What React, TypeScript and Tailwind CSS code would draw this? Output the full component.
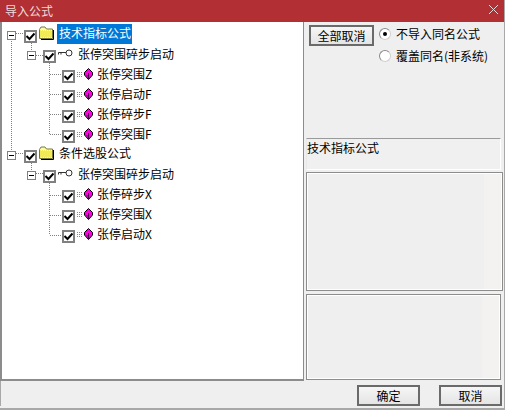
const font = "font-['Noto_Sans_CJK_SC','Liberation_Sans',sans-serif]";

function Check() {
  return (
    <span className="w-[13px] h-[13px] border-2 border-[#808080] bg-white flex items-center justify-center shrink-0">
      <svg width="9" height="9" viewBox="0 0 9 9">
        <path d="M0.5 4 L3.5 7 L8.5 1.5" fill="none" stroke="#000" strokeWidth="2" />
      </svg>
    </span>
  );
}

function Expander() {
  return (
    <span className="w-[9px] h-[9px] border border-[#808080] bg-white flex items-center justify-center shrink-0">
      <span className="w-[5px] h-px bg-black" />
    </span>
  );
}

function Folder() {
  return (
    <svg width="15" height="14" viewBox="0 0 15 14" className="shrink-0">
      <path d="M0.5 3.5 L2 1 H6 L7.5 3 H13.5 V12.5 H0.5 Z" fill="#fffbb0" stroke="#77773a" />
      <path d="M1 5 H13 M2 6 H13 M1 7 H13 M2 8 H13 M1 9 H13 M2 10 H13 M1 11 H13" stroke="#e6d800" strokeDasharray="1 1" />
      <path d="M14.5 4 V13.5 H2" fill="none" stroke="#000" />
    </svg>
  );
}

function Key() {
  return (
    <svg width="15" height="8" viewBox="0 0 15 8" className="shrink-0">
      <circle cx="11" cy="4" r="3" fill="#fff" stroke="#333" />
      <path d="M8 3.5 H0.5 V5.5 M3 3.5 V5.5" fill="none" stroke="#333" />
    </svg>
  );
}

function Gem() {
  return (
    <span className="flex items-center shrink-0">
      <svg width="7" height="7" viewBox="0 0 7 7">
        <path d="M0 1.5 H5 M0 3.5 H6 M0 5.5 H5" stroke="#8a8a8a" strokeDasharray="1 1" />
      </svg>
      <svg width="9" height="12" viewBox="0 0 9 12">
        <path d="M4.5 0.5 L8.5 4.5 V7 L4.5 11.5 L0.5 7 V4.5 Z" fill="#ff00e6" stroke="#000" />
        <path d="M1 7 L4.5 11 V7 Z" fill="#a0109a" />
        <path d="M4.5 5 V11" stroke="#50004a" />
      </svg>
    </span>
  );
}

const rows = [
  { level: 0, text: "技术指标公式", selected: true },
  { level: 1, text: "张停突围碎步启动" },
  { level: 2, text: "张停突围Z" },
  { level: 2, text: "张停启动F" },
  { level: 2, text: "张停碎步F" },
  { level: 2, text: "张停突围F" },
  { level: 0, text: "条件选股公式" },
  { level: 1, text: "张停突围碎步启动" },
  { level: 2, text: "张停碎步X" },
  { level: 2, text: "张停突围X" },
  { level: 2, text: "张停启动X" },
];

function Row({ level, text, selected }: { level: number; text: string; selected?: boolean }) {
  if (level === 0) {
    return (
      <div className="h-[20px] flex items-center pl-[7px]">
        <span className="mt-[2px]"><Expander /></span>
        <span className="w-[8px]" />
        <span className="mt-[4px]"><Check /></span>
        <span className="ml-[2px] -mt-[3px]"><Folder /></span>
        <span className={"ml-[3px] h-[20px] pl-[2px] pr-[1px] leading-[18px] " + (selected ? "bg-[#0078d7] text-white" : "text-black")}>{text}</span>
      </div>
    );
  }
  if (level === 1) {
    return (
      <div className="h-[20px] flex items-center pl-[27px]">
        <span className="mt-[2px]"><Expander /></span>
        <span className="w-[7px]" />
        <span className="mt-[5px]"><Check /></span>
        <span className="ml-[2px] -mt-[2px]"><Key /></span>
        <span className="ml-[5px] text-black">{text}</span>
      </div>
    );
  }
  return (
    <div className="h-[20px] flex items-center pl-[62px]">
      <span className="mt-[5px]"><Check /></span>
      <span className="ml-[2px]"><Gem /></span>
      <span className="ml-[4px] text-black">{text}</span>
    </div>
  );
}

function Connectors() {
  return (
    <svg className="absolute -left-[2px] top-0" width="100" height="240" stroke="#808080" strokeDasharray="1 1" fill="none">
      <path d="M11.5 17 V129 M16 11.5 H24 M31.5 21 V29 M36 33.5 H43 M49.5 41 V113 M50 52.5 H62 M50 72.5 H62 M50 92.5 H62 M50 112.5 H62" />
      <path d="M16 131.5 H24 M31.5 141 V149 M36 151.5 H43 M49.5 161 V213 M50 173.5 H62 M50 193.5 H62 M50 213.5 H62" />
    </svg>
  );
}

function Btn({ children, className }: { children: string; className: string }) {
  return (
    <button className={"border-2 border-[#6a6a6a] bg-gradient-to-b from-[#f6f6f6] to-[#e4e4e4] text-[12px] leading-[16px] text-black " + className}>
      {children}
    </button>
  );
}

function Radio({ on, label }: { on?: boolean; label: string }) {
  return (
    <div className="flex items-center h-[22px]">
      <span className="w-[12px] h-[12px] rounded-full border border-[#8a8a8a] border-r-[#d0d0d0] border-b-[#d0d0d0] bg-white flex items-center justify-center">
        {on && <span className="w-[4px] h-[4px] rounded-full bg-black" />}
      </span>
      <span className="ml-[5px] text-black">{label}</span>
    </div>
  );
}

function Panel({ className }: { className: string }) {
  return (
    <div className={"border border-[#8c8c8c] flex justify-end shrink-0 shadow-[inset_1px_1px_0_#fff,inset_-1px_-1px_0_#fff] " + className}>
      <div className="w-[17px] my-[1px] mr-[1px] bg-[#f3f2f0]" />
    </div>
  );
}

export default function App() {
  return (
    <div className={"w-[505px] h-[410px] bg-[#efefef] flex flex-col text-[12px] overflow-hidden border-b-2 border-r border-[#a8a8a8] " + font}>
      <div className="h-[22px] bg-[#b22f33] flex items-center justify-between pl-[5px] shrink-0">
        <span className="text-[#f0dcdc]">导入公式</span>
        <svg width="22" height="22" viewBox="0 0 22 22">
          <path d="M7 5 L16 14 M16 5 L7 14" stroke="#f0d8d8" strokeWidth="1" />
        </svg>
      </div>
      <div className="flex h-[359px] shrink-0">
        <div className="relative w-[304px] bg-white border-l-2 border-r border-b-2 border-[#8c8c8c] pt-[2px] shrink-0">
          <Connectors />
          <div className="relative -ml-[2px]">
            {rows.map((r, i) => (
              <Row key={i} level={r.level} text={r.text} selected={r.selected} />
            ))}
          </div>
        </div>
        <div className="flex-1 pl-[2px] flex flex-col">
          <div className="h-[116px] flex pt-[3px] pl-[3px] shrink-0">
            <Btn className="w-[65px] h-[21px]">全部取消</Btn>
            <div className="ml-[5px] -mt-[2px]">
              <Radio on label="不导入同名公式" />
              <Radio label="覆盖同名(非系统)" />
            </div>
          </div>
          <div className="h-[32px] w-[195px] border-t border-[#9a9a9a] border-l border-r border-b border-l-[#e8e8e8] border-r-white border-b-white bg-[#f0f0f0] leading-[18px] text-black shrink-0">技术指标公式</div>
          <Panel className="mt-[2px] h-[119px] w-[197px]" />
          <Panel className="mt-[3px] h-[86px] w-[195px]" />
        </div>
      </div>
      <div className="flex justify-end gap-[19px] pr-[2px] pt-[4px] border-l border-[#a8a8a8]">
        <Btn className="w-[63px] h-[21px]">确定</Btn>
        <Btn className="w-[63px] h-[21px]">取消</Btn>
      </div>
    </div>
  );
}
